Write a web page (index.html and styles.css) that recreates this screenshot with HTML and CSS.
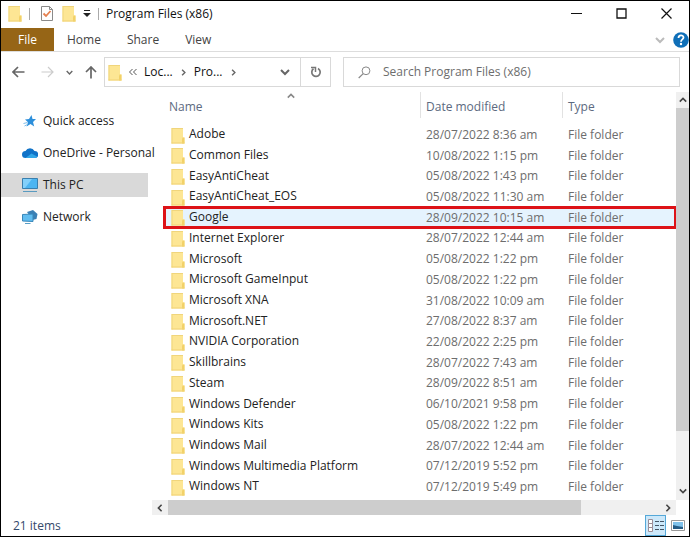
FILE: index.html
```
<!DOCTYPE html>
<html lang="en">
<head>
<meta charset="utf-8">
<title>Program Files (x86)</title>
<link rel="stylesheet" href="styles.css">
</head>
<body>
<svg class="defs" aria-hidden="true">
  <symbol id="folder" viewBox="0 0 14 17">
    <path d="M.5 1h11.500v9.500H13.500V16.500H.5z" fill="#fde694"/>
    <path d="M.5 1h11.500v1H1.500v14.500H.5z" fill="#f0d57c"/>
    <path d="M11.500 10.500H13.500V16.500h-2.500v-4z" fill="#f2d168"/>
    <path d="M.5 15.500h13v1H.5z" fill="#f0d274"/>
  </symbol>
  <symbol id="down" viewBox="0 0 10 10"><path d="M1 3l4 4 4-4" fill="none" stroke="currentColor" stroke-width="2"/></symbol>
  <symbol id="up" viewBox="0 0 10 10"><path d="M1 7l4-4 4 4" fill="none" stroke="currentColor" stroke-width="2"/></symbol>
  <symbol id="left" viewBox="0 0 10 10"><path d="M7 1L3 5l4 4" fill="none" stroke="currentColor" stroke-width="2"/></symbol>
  <symbol id="right" viewBox="0 0 10 10"><path d="M3 1l4 4-4 4" fill="none" stroke="currentColor" stroke-width="2"/></symbol>
</svg>
<div class="window">
  <header class="titlebar">
    <svg class="folder"><use href="#folder"/></svg>
    <span class="rule"></span>
    <button class="quick" aria-label="Properties"><svg width="14" height="17" viewBox="0 0 14 17"><path d="M1.500 1.500h8l3 3v11h-11z" fill="#fff" stroke="#8a8a8a"/><path d="M9.500 1.500v3h3" fill="none" stroke="#8a8a8a"/><path d="M3.500 8.500l2.500 2.500 4.500-5" fill="none" stroke="#e5804f" stroke-width="1.800"/></svg></button>
    <button class="quick" aria-label="New folder"><svg class="folder"><use href="#folder"/></svg></button>
    <button class="quick" aria-label="Customize toolbar"><svg width="8" height="8" viewBox="0 0 8 8"><path d="M1 0h6v1H1zM0 3h8L4 7z" fill="#222"/></svg></button>
    <span class="rule"></span>
    <h1>Program Files (x86)</h1>
    <div class="controls">
      <button aria-label="Minimize"><svg width="11" height="11"><path d="M0 5.500h11" stroke="#111"/></svg></button>
      <button aria-label="Maximize"><svg width="11" height="11"><path d="M1 1h9v9H1z" fill="none" stroke="#111" stroke-width="1.300"/></svg></button>
      <button aria-label="Close"><svg width="11" height="11"><path d="M.5.5l10 10M10.500.5l-10 10" stroke="#111" stroke-width="1.200"/></svg></button>
    </div>
  </header>
  <nav class="ribbon">
    <button class="file">File</button>
    <button>Home</button>
    <button>Share</button>
    <button>View</button>
    <button class="expand" aria-label="Expand ribbon"><svg class="arrow"><use href="#down"/></svg></button>
    <button class="help" aria-label="Help"><svg width="16" height="16" viewBox="0 0 16 16"><circle cx="8" cy="8" r="7.800" fill="#0f6fb8"/><path d="M5.500 6c0-3.500 5-3.300 5-.5 0 2-2.500 1.800-2.500 4.200" fill="none" stroke="#fff" stroke-width="1.800"/><circle cx="8" cy="12" r="1.200" fill="#fff"/></svg></button>
  </nav>
  <div class="navigation">
    <div class="history">
      <button aria-label="Back"><svg width="13" height="12" viewBox="0 0 13 12"><path d="M12.500 6H1M6 1L1 6l5 5" fill="none" stroke="#666" stroke-width="1.700"/></svg></button>
      <button aria-label="Forward"><svg width="13" height="12" viewBox="0 0 13 12"><path d="M.5 6H12M7 1l5 5-5 5" fill="none" stroke="#ccc" stroke-width="1.200"/></svg></button>
      <button class="recent" aria-label="Recent locations"><svg class="tiny"><use href="#down"/></svg></button>
      <button aria-label="Up"><svg width="12" height="13" viewBox="0 0 12 13"><path d="M6 12.500V1M1 6l5-5 5 5" fill="none" stroke="#666" stroke-width="1.700"/></svg></button>
    </div>
    <div class="address">
      <svg class="folder"><use href="#folder"/></svg>
      <svg class="chevrons" viewBox="0 0 8 8"><path d="M3.500 1l-3 3 3 3M7.500 1l-3 3 3 3" fill="none" stroke="#555"/></svg>
      <button>Loc...</button>
      <svg class="tiny"><use href="#right"/></svg>
      <button>Pro...</button>
      <svg class="tiny"><use href="#right"/></svg>
      <button class="previous" aria-label="Previous locations"><svg class="arrow"><use href="#down"/></svg></button>
      <button class="refresh" aria-label="Refresh"><svg width="12" height="12" viewBox="0 0 12 12"><path d="M8 2.500a4.200 4.200 0 1 1-4.500.3" fill="none" stroke="#777" stroke-width="1.700"/><path d="M1 1.500h4.500V6" fill="none" stroke="#777" stroke-width="1.500"/></svg></button>
    </div>
    <label class="search">
      <svg width="13" height="13" viewBox="0 0 13 13"><circle cx="8" cy="4.800" r="3.900" fill="none" stroke="#888"/><path d="M5.200 7.600L.7 12" stroke="#888" stroke-width="1.200"/></svg>
      <input type="text" aria-label="Search" placeholder="Search Program Files (x86)">
    </label>
  </div>
  <main class="content">
    <nav class="tree">
      <a href="#quick"><svg viewBox="0 0 16 14"><path d="M9.500 1l1 4H14l-3 3 1.200 4.500-3.700-2.500-4 2.500L6 8.300 3 5.500l4-.5z" fill="#2d8fdb"/><path d="M1.500 9.500l4-1M2.500 12l3-1.500" stroke="#7dbdec"/></svg>Quick access</a>
      <a href="#onedrive"><svg viewBox="0 0 16 14"><path d="M3.500 12a3.500 3.500 0 0 1 0-7A5 5 0 0 1 12.500 5 3.500 3.500 0 0 1 13 12z" fill="#1173c8"/><path d="M3.500 12l6-4.500 5.500 3c-.4 1-1 1.500-2 1.500z" fill="#32a7e8"/></svg>OneDrive - Personal</a>
      <a class="current" href="#pc"><svg viewBox="0 0 16 14"><path d="M.5.500h15v10H.5z" fill="#4db5f1" stroke="#397fae"/><path d="M1 1h9L3 10H1z" fill="#83d0fa"/><path d="M1 13.500h14" stroke="#5a9bc0"/></svg>This PC</a>
      <a href="#network"><svg viewBox="0 0 16 14"><path d="M5 2l6-2 4.500 4-1 5-4 1z" fill="#3a80b5"/><path d="M.5 4.500L11 4v7.500L.5 11z" fill="#61bdf0" stroke="#3987b9"/><path d="M3 13.500h5.500" stroke="#599fc7"/></svg>Network</a>
    </nav>
    <section class="files">
      <div class="listing">
        <table>
          <thead><tr><th class="name">Name<svg class="sort"><use href="#up"/></svg></th><th class="date">Date modified</th><th>Type</th></tr></thead>
          <tbody>
            <tr><td><svg class="folder"><use href="#folder"/></svg>Adobe</td><td>28/07/2022 8:36 am</td><td>File folder</td></tr>
            <tr><td><svg class="folder"><use href="#folder"/></svg>Common Files</td><td>10/08/2022 1:15 pm</td><td>File folder</td></tr>
            <tr><td><svg class="folder"><use href="#folder"/></svg>EasyAntiCheat</td><td>05/08/2022 1:43 pm</td><td>File folder</td></tr>
            <tr><td><svg class="folder"><use href="#folder"/></svg>EasyAntiCheat_EOS</td><td>05/08/2022 11:30 am</td><td>File folder</td></tr>
            <tr class="marked"><td><svg class="folder"><use href="#folder"/></svg>Google</td><td>28/09/2022 10:15 am</td><td>File folder</td></tr>
            <tr><td><svg class="folder"><use href="#folder"/></svg>Internet Explorer</td><td>28/07/2022 12:44 am</td><td>File folder</td></tr>
            <tr><td><svg class="folder"><use href="#folder"/></svg>Microsoft</td><td>05/08/2022 1:22 pm</td><td>File folder</td></tr>
            <tr><td><svg class="folder"><use href="#folder"/></svg>Microsoft GameInput</td><td>05/08/2022 1:22 pm</td><td>File folder</td></tr>
            <tr><td><svg class="folder"><use href="#folder"/></svg>Microsoft XNA</td><td>31/08/2022 10:09 am</td><td>File folder</td></tr>
            <tr><td><svg class="folder"><use href="#folder"/></svg>Microsoft.NET</td><td>27/08/2022 8:37 am</td><td>File folder</td></tr>
            <tr><td><svg class="folder"><use href="#folder"/></svg>NVIDIA Corporation</td><td>22/08/2022 2:25 pm</td><td>File folder</td></tr>
            <tr><td><svg class="folder"><use href="#folder"/></svg>Skillbrains</td><td>28/07/2022 7:43 am</td><td>File folder</td></tr>
            <tr><td><svg class="folder"><use href="#folder"/></svg>Steam</td><td>28/09/2022 8:51 am</td><td>File folder</td></tr>
            <tr><td><svg class="folder"><use href="#folder"/></svg>Windows Defender</td><td>06/10/2021 9:58 pm</td><td>File folder</td></tr>
            <tr><td><svg class="folder"><use href="#folder"/></svg>Windows Kits</td><td>05/08/2022 1:22 pm</td><td>File folder</td></tr>
            <tr><td><svg class="folder"><use href="#folder"/></svg>Windows Mail</td><td>28/07/2022 12:44 am</td><td>File folder</td></tr>
            <tr><td><svg class="folder"><use href="#folder"/></svg>Windows Multimedia Platform</td><td>07/12/2019 5:52 pm</td><td>File folder</td></tr>
            <tr><td><svg class="folder"><use href="#folder"/></svg>Windows NT</td><td>07/12/2019 5:49 pm</td><td>File folder</td></tr>
          </tbody>
        </table>
      </div>
      <div class="vscroll"><svg class="arrow"><use href="#up"/></svg><div class="track"><div class="thumb"></div></div><svg class="arrow"><use href="#down"/></svg></div>
      <div class="hscroll"><svg class="arrow"><use href="#left"/></svg><div class="track"><div class="thumb"></div></div><svg class="arrow"><use href="#right"/></svg></div>
    </section>
  </main>
  <footer class="status">
    <span>21 items</span>
    <button class="details" aria-label="Details view"><svg width="18" height="15" viewBox="0 0 18 15"><path d="M1.500 1.500h4v4h-4zM1.500 5.500h4v4h-4zM1.500 9.500h4v4h-4z" fill="#fff" stroke="#9b8c96"/><path d="M8 3.500h4m1 0h4M8 7.500h4m1 0h4M8 11.500h4m1 0h4" stroke="#456"/></svg></button>
    <button aria-label="Large icons view"><svg width="14" height="11" viewBox="0 0 14 11"><path d="M.5.500h13v10H.5z" fill="#fff" stroke="#999"/><path d="M2 2h10v7H2z" fill="#7fc1ea"/><path d="M2 5l4 1 6 1v2H2z" fill="#245b85"/></svg></button>
  </footer>
</div>
</body>
</html>
```
FILE: styles.css
```
* { box-sizing: border-box; }
body { margin: 0; font: 12px/16px "Open Sans", "Noto Sans", sans-serif; color: #222; background: #fff; }
button { padding: 0; border: 0; background: none; font: inherit; color: inherit; display: flex; align-items: center; justify-content: center; }
svg { display: block; flex: none; }
.defs { display: none; }
.window { display: flex; flex-direction: column; height: 100vh; border: 1px solid #000; }
.folder { width: 14px; height: 17px; }
.arrow, .tiny { width: 10px; height: 10px; color: #666; }
.tiny { width: 7px; height: 7px; }

.titlebar { display: flex; align-items: center; gap: 7px; height: 27px; padding: 0 0 2px 7px; }
.titlebar h1 { margin: 0; font: inherit; color: #111; }
.rule { width: 1px; height: 12px; background: #aaa; }
.rule + .quick { margin: 0 1px 0 3px; }
.controls { display: flex; margin-left: auto; }
.controls button { width: 45px; height: 26px; }

.ribbon { display: flex; height: 24px; border-bottom: 1px solid #ddd; color: #444; }
.ribbon button { padding: 0 13px; }
.ribbon .file { width: 53px; padding: 0; background: #966516; color: #fff; }
.ribbon .expand { margin-left: auto; padding: 0 8px; }
.ribbon .expand svg { color: #bbb; }
.ribbon .help { padding: 0; }

.navigation { display: flex; height: 40px; padding: 5px 9px 5px 11px; }
.history { display: flex; align-items: center; gap: 16px; width: 92px; }
.history .recent { margin: 0 -4px; }
.address { display: flex; align-items: center; gap: 7px; width: 227px; border: 1px solid #d9d9d9; padding-left: 3px; color: #111; }
.address .chevrons { width: 8px; height: 8px; }
.previous { margin-left: auto; padding: 0 3px; }
.refresh { align-self: stretch; width: 30px; border-left: 1px solid #d9d9d9; }
.search { display: flex; align-items: center; gap: 12px; flex: 1; margin-left: 12px; padding-left: 14px; border: 1px solid #d9d9d9; }
.search input { flex: 1; min-width: 0; padding: 0; border: 0; outline: 0; background: none; font: inherit; }
.search input::placeholder { color: #6d6d6d; opacity: 1; }

.content { display: flex; flex: 1; min-height: 0; }
.tree { width: 147px; padding-top: 17px; display: flex; flex-direction: column; gap: 8px; }
.tree a { display: flex; align-items: center; gap: 5px; height: 24px; padding-left: 21px; color: #222; text-decoration: none; white-space: nowrap; }
.tree svg { width: 16px; height: 14px; }
.tree .current { background: #d9d9d9; }

.files { flex: 1; min-width: 0; margin-left: 4px; display: grid; grid-template: minmax(0, 1fr) 15px / minmax(0, 1fr) 13px; }
.listing { overflow: hidden; padding: 0 0 3px 12px; height: 100%; }
table { width: 100%; height: 100%; border-collapse: collapse; table-layout: fixed; }
th, td { padding: 1px 0 0 6px; text-align: left; font-weight: 400; white-space: nowrap; line-height: 16px; }
th { position: relative; height: 32px; padding-bottom: 4px; color: #5c6a80; }
th + th { background: linear-gradient(#e2e2e2, #e2e2e2) 0 0 / 1px 26px no-repeat; }
th:first-child { padding-left: 5px; }
.name { width: 256px; }
.date { width: 142px; }
.sort { position: absolute; top: 0; left: 123px; width: 8px; height: 8px; color: #888; }
td { color: #6d6d6d; }
td:first-child { color: #222; padding-left: 7px; }
td .folder { display: inline-block; margin-right: 4px; vertical-align: middle; }
.marked { background: #e5f3fe; outline: 3px solid #dd1217; outline-offset: -2px; }
.vscroll, .hscroll { display: flex; align-items: center; background: #f0f0f0; gap: 4px; }
.vscroll { flex-direction: column; padding: 4px 0 5px; }
.hscroll { padding: 0 4px; }
.track { flex: 1; align-self: stretch; }
.thumb { background: #cdcdcd; }
.vscroll .thumb { height: 86%; }
.hscroll .thumb { width: 84%; height: 100%; }
.vscroll .arrow, .hscroll .arrow { width: 8px; height: 8px; color: #444; }

.status { display: flex; height: 21px; padding-left: 12px; color: #34496b; }
.status span { margin: 3px auto 0 0; }
.status button { width: 21px; }
.status .details { border: 1px solid #55a8d8; background: #cce8fa; }
.status button:last-child { width: 23px; }
```
